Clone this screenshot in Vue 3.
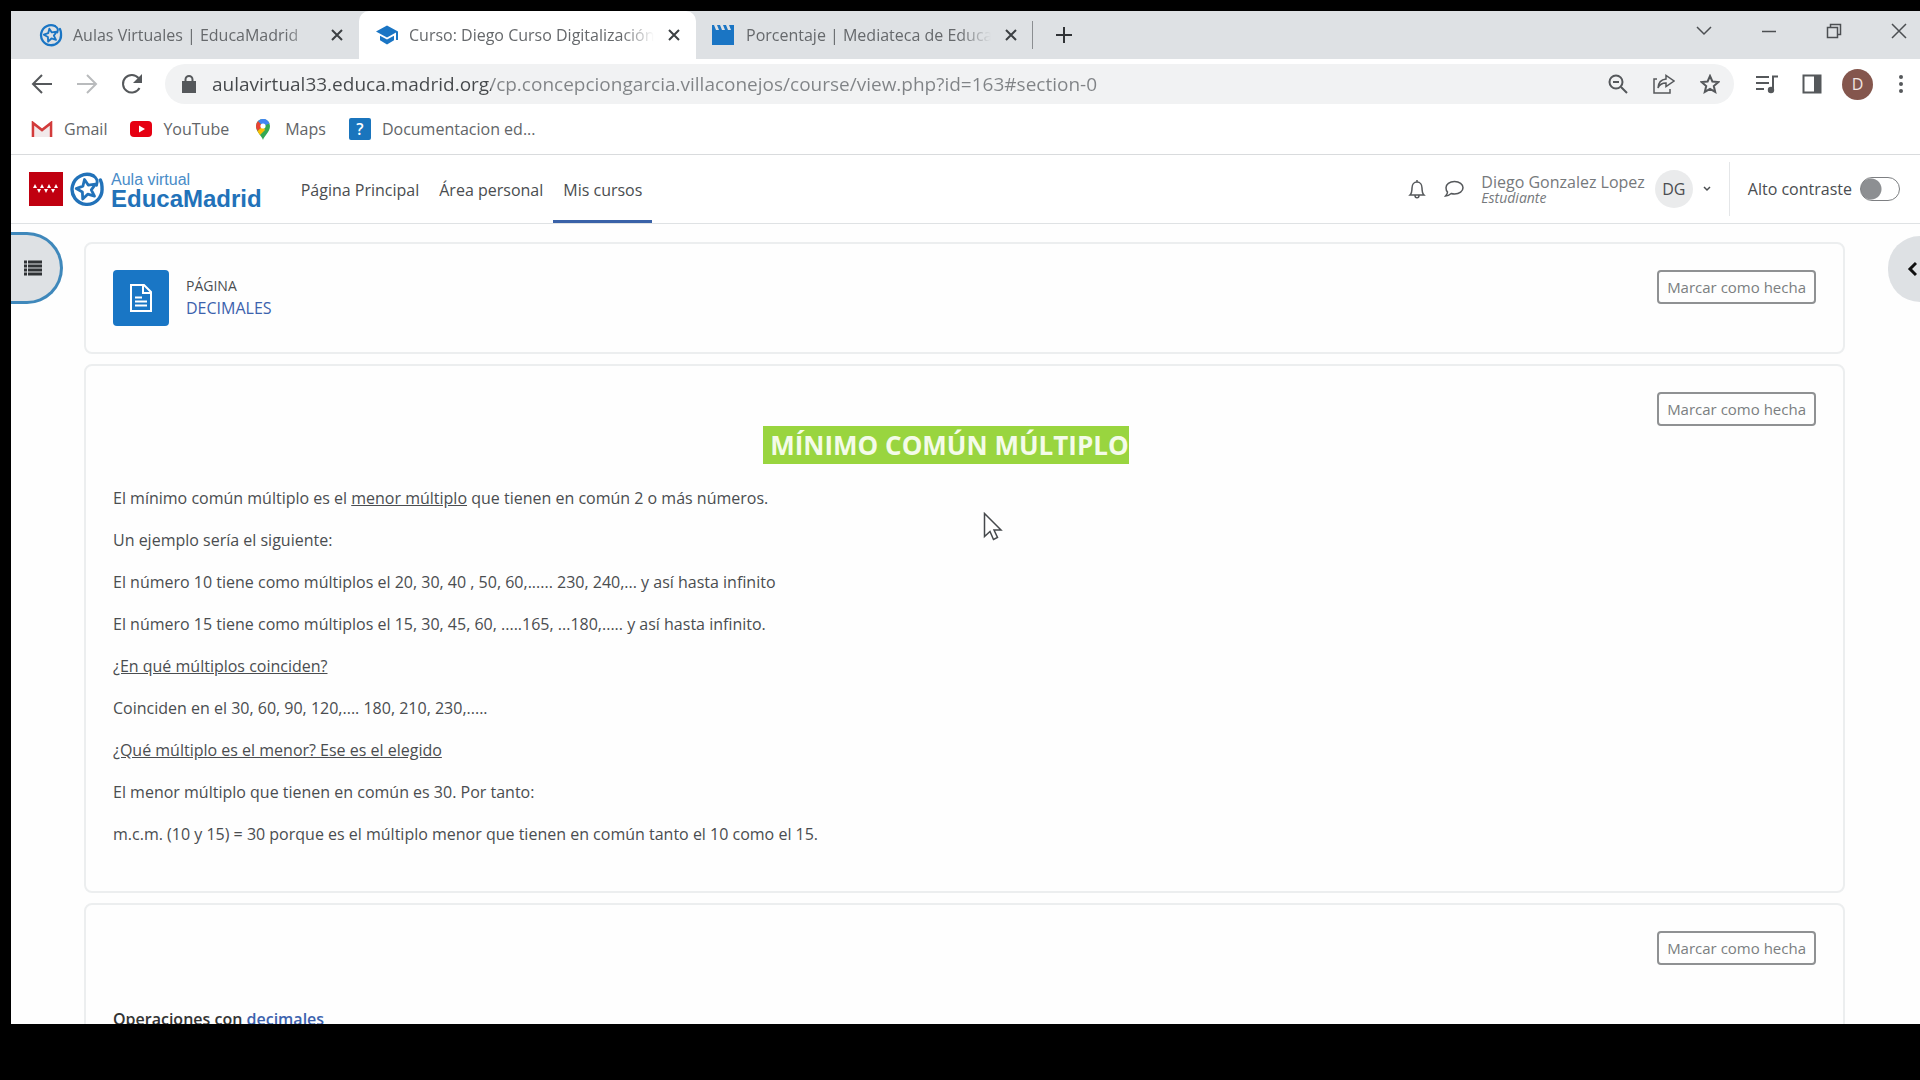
<template>
  <div class="screen">
    <svg class="sprite" aria-hidden="true">
      <symbol id="educa" viewBox="0 0 36 36">
        <path d="M24 4.600A15 15 0 1 0 33 17c.2-3-.4-5.500-1.600-8" fill="none" stroke="currentColor" stroke-width="3.400" stroke-linecap="round" />
        <path d="M24 4.600c4 2 5 6 3.500 9.500" fill="none" stroke="currentColor" stroke-width="3" stroke-linecap="round" />
        <path d="M15.500 8.500l3.700 5.600 7.300-.9-4.200 5.700 3.200 6.300-6.800-2-5 4.800-.3-7-6.200-3.400 6.700-2.500z" fill="none" stroke="currentColor" stroke-width="2.800" stroke-linejoin="round" />
      </symbol>
    </svg>

    <div class="browser">
      <div class="tab-strip">
        <div class="tabs" role="tablist">
          <div
            v-for="tab in tabs"
            :key="tab.title"
            :class="['tab', { active: tab.active }]"
          >
            <svg v-if="tab.icon === 'educa'" class="favicon"><use href="#educa" /></svg>
            <svg v-else-if="tab.icon === 'course'" class="favicon" viewBox="0 0 24 24">
              <path d="M12 2.500L1 8.500l11 6 9-4.900V17h2V8.500zM5 12.700v4.600l7 4.200 7-4.200v-4.600l-7 3.900z" fill="currentColor" />
            </svg>
            <svg v-else class="favicon" viewBox="0 0 24 24">
              <path d="M0 2h2l2 5h3L5 2h3l2 5h3l-2-5h3l2 5h3l-2-5h5v20H0z" fill="currentColor" />
            </svg>
            <button class="tab-title" role="tab" :aria-selected="tab.active">{{ tab.title }}</button>
            <button class="tab-close" aria-label="Cerrar">
              <svg width="12" height="12" viewBox="0 0 12 12"><path d="M1 1l10 10M11 1L1 11" /></svg>
            </button>
          </div>
        </div>
        <button class="new-tab" aria-label="Nueva pestaña">
          <svg width="18" height="18" viewBox="0 0 18 18"><path d="M9 1v16M1 9h16" /></svg>
        </button>
        <div class="window-controls">
          <button aria-label="Buscar pestañas">
            <svg width="16" height="16" viewBox="0 0 16 16"><path d="M1 4l7 7 7-7" /></svg>
          </button>
          <button aria-label="Minimizar">
            <svg width="16" height="16" viewBox="0 0 16 16"><path d="M1 8.500h14" /></svg>
          </button>
          <button aria-label="Restaurar">
            <svg width="16" height="16" viewBox="0 0 16 16"><path d="M1.500 4.500h10v10h-10zM4.500 4V1.500h10v10H12" /></svg>
          </button>
          <button aria-label="Cerrar ventana">
            <svg width="16" height="16" viewBox="0 0 16 16"><path d="M1 1l14 14M15 1L1 15" /></svg>
          </button>
        </div>
      </div>

      <div class="toolbar">
        <button class="tool" aria-label="Atrás">
          <svg width="22" height="22" viewBox="0 0 22 22"><path d="M21 11H2M11 2l-9 9 9 9" /></svg>
        </button>
        <button class="tool faded" aria-label="Adelante">
          <svg width="22" height="22" viewBox="0 0 22 22"><path d="M1 11h19M11 2l9 9-9 9" /></svg>
        </button>
        <button class="tool" aria-label="Recargar">
          <svg width="22" height="22" viewBox="0 0 22 22">
            <path d="M18.500 15A8.800 8.800 0 1 1 17.500 5" />
            <path d="M21 1v9h-9z" fill="currentColor" stroke="none" />
          </svg>
        </button>
        <div class="address">
          <svg class="lock" width="14" height="18" viewBox="0 0 14 18">
            <path d="M1 7h12v10H1z" fill="currentColor" />
            <path d="M3.500 8V4.500a3.500 3.500 0 0 1 7 0V8" />
          </svg>
          <input v-model="url" class="url" type="text" aria-label="Dirección" />
          <button class="tool" aria-label="Zoom">
            <svg width="20" height="20" viewBox="0 0 20 20"><circle cx="8" cy="8" r="6.500" /><path d="M13 13l6 6M5 8h6" /></svg>
          </button>
          <button class="tool" aria-label="Compartir">
            <svg width="22" height="20" viewBox="0 0 22 20" class="thin">
              <path d="M4 5H1v14h16v-4M13 5V1.500l8 5.500-8 5.500V9c-4 0-6.500 1.500-8 5 .3-5 3-8.500 8-9z" />
            </svg>
          </button>
          <button class="tool" aria-label="Añadir a marcadores">
            <svg width="20" height="20" viewBox="0 0 20 20">
              <path d="M10 2l2.400 5.500 6 .5-4.600 4 1.400 5.900L10 14.800l-5.200 3.100L6.200 12 1.600 8l6-.5z" />
            </svg>
          </button>
        </div>
        <button class="tool" aria-label="Multimedia">
          <svg width="24" height="20" viewBox="0 0 24 20">
            <path d="M1 3h13M1 9h13M1 15h8M18 16V2.500h5" />
            <circle cx="16" cy="16" r="2.200" fill="currentColor" />
          </svg>
        </button>
        <button class="tool" aria-label="Panel lateral">
          <svg width="20" height="20" viewBox="0 0 20 20">
            <path d="M1.500 1.500h17v17h-17z" />
            <path d="M12 1h7v18h-7z" fill="currentColor" stroke="none" />
          </svg>
        </button>
        <button class="profile">D</button>
        <button class="tool" aria-label="Menú">
          <svg width="6" height="20" viewBox="0 0 6 20">
            <g fill="currentColor" stroke="none"><circle cx="3" cy="3" r="2" /><circle cx="3" cy="10" r="2" /><circle cx="3" cy="17" r="2" /></g>
          </svg>
        </button>
      </div>

      <nav class="bookmarks" aria-label="Marcadores">
        <a href="#">
          <svg width="22" height="16" viewBox="0 0 22 16">
            <path d="M4 4l7 6 7-6v12H4z" fill="#f1e9ea" />
            <path d="M2 16V2l9 7 9-7v14" fill="none" stroke="#d23b3b" stroke-width="2.600" />
          </svg>
          Gmail
        </a>
        <a href="#">
          <svg width="22" height="16" viewBox="0 0 22 16">
            <rect width="22" height="16" rx="4" fill="#e60012" />
            <path d="M9 4.500v7l6-3.500z" fill="#fff" />
          </svg>
          YouTube
        </a>
        <a href="#">
          <svg width="22" height="22" viewBox="0 0 22 22">
            <path d="M11 22c-1-4-7-8-7-14a7 7 0 0 1 14 0c0 6-6 10-7 14z" fill="#34a853" />
            <path d="M4 8a7 7 0 0 1 2-5l5 5-5.500 5C4.500 11 4 9.500 4 8z" fill="#e94235" />
            <path d="M5.500 13L11 8l2 4-5 5c-1-1.300-2-2.600-2.500-4z" fill="#fbbc04" />
            <path d="M6 3a7 7 0 0 1 11.500 2.500L11 8z" fill="#4285f4" />
            <circle cx="11" cy="8" r="2.600" fill="#fff" />
          </svg>
          Maps
        </a>
        <a href="#">
          <span class="help-icon">?</span>
          Documentacion ed...
        </a>
      </nav>

      <header class="site-header">
        <a class="brand" href="#">
          <svg class="flag" width="34" height="34" viewBox="0 0 34 34">
            <rect width="34" height="34" fill="#c00010" />
            <path d="M4 16l2-4 2 4zM11 16l2-4 2 4zM18 16l2-4 2 4zM25 16l2-4 2 4zM8 17h4l-2 4zM15 17h4l-2 4zM22 17h4l-2 4z" fill="#fff" />
          </svg>
          <svg class="brand-logo"><use href="#educa" /></svg>
          <span class="brand-text">
            <span class="brand-small">Aula virtual</span>
            <span class="brand-name">EducaMadrid</span>
          </span>
        </a>
        <nav class="main-nav" aria-label="Principal">
          <a v-for="link in links" :key="link" href="#" :class="{ current: link === 'Mis cursos' }">{{ link }}</a>
        </nav>
        <div class="user-area">
          <button class="tool" aria-label="Notificaciones">
            <svg width="18" height="20" viewBox="0 0 18 20" class="thin">
              <path d="M9 1v2M2 16c2-2 2-4 2-7 0-3.500 2-6 5-6s5 2.500 5 6c0 3 0 5 2 7zM7 16.500c0 3 4 3 4 0" />
            </svg>
          </button>
          <button class="tool" aria-label="Mensajes">
            <svg width="20" height="18" viewBox="0 0 20 18" class="thin">
              <path d="M10.500 1.500c5 0 8.500 2.800 8.500 6.200S15.500 14 10.500 14c-1.200 0-2.300-.2-3.300-.5C5.500 15 3.500 16 1.500 16c1-1 2-2.500 2-4C2.500 11 2 9.500 2 7.700c0-3.400 3.500-6.200 8.500-6.200z" />
            </svg>
          </button>
          <div class="user-name">
            <span>Diego Gonzalez Lopez</span>
            <em>Estudiante</em>
          </div>
          <button class="user-menu" aria-label="Menú de usuario">
            <span class="initials">DG</span>
            <svg width="8" height="8" viewBox="0 0 8 8" class="thin"><path d="M1 2l3 3 3-3" /></svg>
          </button>
          <label class="contrast" for="contrast">
            Alto contraste
            <input id="contrast" v-model="highContrast" type="checkbox" />
          </label>
        </div>
      </header>

      <main class="course">
        <button class="drawer drawer-left" aria-label="Abrir índice del curso">
          <svg width="18" height="16" viewBox="0 0 18 16">
            <path d="M0 2h3M0 6h3M0 10h3M0 14h3M4 2h14M4 6h14M4 10h14M4 14h14" />
          </svg>
        </button>
        <button class="drawer drawer-right" aria-label="Abrir cajón de bloques">
          <svg width="10" height="16" viewBox="0 0 10 16"><path d="M9 2L3 8l6 6" /></svg>
        </button>

        <section class="card">
          <div class="activity">
            <span class="activity-icon">
              <svg width="24" height="30" viewBox="0 0 24 30">
                <path d="M2 2h13l7 7v19H2zM14 2v8h8M6 14.500h7M6 18.500h12M6 22.500h12" />
              </svg>
            </span>
            <div class="activity-name">
              <span>PÁGINA</span>
              <a href="#">DECIMALES</a>
            </div>
          </div>
          <button class="done">Marcar como hecha</button>
        </section>

        <section class="card lesson">
          <div class="lesson-text">
            <h2><mark>&nbsp;MÍNIMO COMÚN MÚLTIPLO</mark></h2>
            <p>El mínimo común múltiplo es el <u>menor múltiplo</u> que tienen en común 2 o más números.</p>
            <p>Un ejemplo sería el siguiente:</p>
            <p>El número 10 tiene como múltiplos el 20, 30, 40 , 50, 60,...... 230, 240,... y así hasta infinito</p>
            <p>El número 15 tiene como múltiplos el 15, 30, 45, 60, .....165, ...180,..... y así hasta infinito.</p>
            <p><u>¿En qué múltiplos coinciden?</u></p>
            <p>Coinciden en el 30, 60, 90, 120,.... 180, 210, 230,.....</p>
            <p><u>¿Qué múltiplo es el menor? Ese es el elegido</u></p>
            <p>El menor múltiplo que tienen en común es 30. Por tanto:</p>
            <p>m.c.m. (10 y 15) = 30 porque es el múltiplo menor que tienen en común tanto el 10 como el 15.</p>
          </div>
          <button class="done">Marcar como hecha</button>
        </section>

        <section class="card operations">
          <p>Operaciones con <a href="#">decimales</a></p>
          <button class="done">Marcar como hecha</button>
        </section>
      </main>
    </div>

    <svg class="pointer" width="20" height="30" viewBox="0 0 20 30">
      <path d="M1.500 1.500v23l5.500-5 3.500 8 4-2-3.500-7.500h7z" />
    </svg>
  </div>
</template>

<script setup>
import { ref } from 'vue'

const url = ref('aulavirtual33.educa.madrid.org/cp.concepciongarcia.villaconejos/course/view.php?id=163#section-0')
const highContrast = ref(false)

const tabs = [
  { title: 'Aulas Virtuales | EducaMadrid', icon: 'educa', active: false },
  { title: 'Curso: Diego Curso Digitalización', icon: 'course', active: true },
  { title: 'Porcentaje | Mediateca de EducaMadrid', icon: 'media', active: false }
]

const links = ['Página Principal', 'Área personal', 'Mis cursos']
</script>

<style>
body {
  margin: 0;
  background: #000;
}
</style>

<style scoped>
.screen {
  position: relative;
  box-sizing: border-box;
  height: 100vh;
  padding: 11px 0 56px 11px;
  background: #000;
  font-family: "Open Sans", "Noto Sans", sans-serif;
  font-size: 16px;
  color: #4a4d50;
}

.sprite {
  position: absolute;
  width: 0;
  height: 0;
}

.browser {
  display: flex;
  flex-direction: column;
  height: 100%;
  overflow: hidden;
  background: #fefefe;
}

button {
  display: flex;
  align-items: center;
  justify-content: center;
  flex: none;
  padding: 0;
  border: 0;
  background: none;
  font: inherit;
  color: inherit;
}

a {
  color: inherit;
  text-decoration: none;
}

svg {
  flex: none;
  fill: none;
  stroke: currentColor;
  stroke-width: 2;
}

.thin {
  stroke-width: 1.5;
}

/* tab strip */
.tab-strip {
  display: flex;
  align-items: center;
  flex: none;
  height: 48px;
  background: #dee1e4;
}

.tabs {
  display: flex;
  height: 48px;
}

.tab {
  display: flex;
  align-items: center;
  box-sizing: border-box;
  width: 337px;
  padding: 0 14px 0 16px;
}

.tab:first-child {
  width: 348px;
  padding-left: 28px;
}

.tab.active {
  border-radius: 10px 10px 0 0;
  background: #fff;
}

.tab:last-child {
  position: relative;
}

.tab:last-child::after {
  content: "";
  position: absolute;
  right: 0;
  width: 1px;
  height: 28px;
  background: #8b8e91;
}

.favicon {
  width: 24px;
  height: 24px;
  color: #1a75c4;
  stroke: none;
}

.tab-title {
  display: block;
  flex: 1;
  min-width: 0;
  margin: 0 8px 0 10px;
  overflow: hidden;
  text-align: left;
  white-space: nowrap;
  color: #66696c;
  mask-image: linear-gradient(to right, #000 calc(100% - 36px), transparent calc(100% - 4px));
}

.tab-close {
  width: 16px;
  height: 24px;
  color: #3c4043;
}

.new-tab {
  width: 62px;
  color: #303336;
}

.window-controls {
  display: flex;
  margin-left: auto;
  padding-bottom: 8px;
  color: #4c4f52;
}

.window-controls button {
  width: 65px;
  height: 32px;
}

.window-controls button:last-child {
  width: 54px;
  padding-left: 12px;
  box-sizing: border-box;
}

.window-controls svg {
  stroke-width: 1.5;
}

/* toolbar */
.toolbar {
  display: flex;
  align-items: center;
  flex: none;
  gap: 21px;
  padding: 5px 16px 0 19px;
  background: #fff;
}

.tool {
  min-width: 6px;
  height: 24px;
  color: #55585b;
}

.toolbar > .tool:not(:last-child) {
  width: 24px;
}

.tool.faded {
  color: #b9bbbd;
}

.address {
  display: flex;
  align-items: center;
  flex: 1;
  gap: 25px;
  height: 40px;
  padding: 0 14px 0 17px;
  border-radius: 20px;
  background: #f1f2f3;
}

.lock {
  color: #55585b;
}

.url {
  flex: 1;
  min-width: 0;
  margin-left: -9px;
  padding: 0;
  border: 0;
  outline: none;
  font: inherit;
  font-size: 19px;
  background: linear-gradient(to right, #45484b 279px, #808386 279px);
  background-clip: text;
  -webkit-text-fill-color: transparent;
}

.profile {
  width: 31px;
  height: 31px;
  margin-left: -3px;
  margin-right: 4px;
  border-radius: 50%;
  background: #84564d;
  color: #f3e6e2;
  font-size: 16px;
}

/* bookmarks */
.bookmarks {
  display: flex;
  align-items: center;
  flex: none;
  gap: 23px;
  height: 50px;
  padding: 0 20px;
  border-bottom: 1px solid #d9dbdd;
  background: #fff;
  color: #626568;
}

.bookmarks a {
  display: flex;
  align-items: center;
  gap: 11px;
}

.bookmarks svg {
  stroke: none;
}

.help-icon {
  width: 22px;
  height: 22px;
  border-radius: 2px;
  background: #1a75bd;
  color: #fff;
  font-weight: 600;
  line-height: 22px;
  text-align: center;
}

/* site header */
.site-header {
  display: flex;
  align-items: stretch;
  flex: none;
  height: 68px;
  padding: 0 20px 0 18px;
  border-bottom: 1px solid #dfe2e4;
  background: #fff;
}

.brand {
  display: flex;
  align-items: center;
  color: #2272b9;
  font-family: "Liberation Sans", Arial, sans-serif;
}

.brand .flag {
  stroke: none;
}

.brand-logo {
  width: 36px;
  height: 36px;
  margin: 0 6px;
  stroke: none;
}

.brand-text {
  display: flex;
  flex-direction: column;
  padding-top: 4px;
}

.brand-small {
  color: #4a8cc8;
  font-size: 16px;
  line-height: 16px;
}

.brand-name {
  font-size: 24px;
  font-weight: 700;
  line-height: 22px;
}

.main-nav {
  display: flex;
  margin-left: 29px;
}

.main-nav a {
  display: flex;
  align-items: center;
  padding: 4px 10px 0;
  border-bottom: 3px solid transparent;
}

.main-nav .current {
  border-bottom-color: #3a62a8;
}

.user-area {
  display: flex;
  align-items: center;
  gap: 18px;
  margin-left: auto;
}

.user-name {
  display: flex;
  flex-direction: column;
  margin-left: -1px;
  color: #76797c;
  line-height: 18px;
}

.user-name em {
  font-size: 14px;
  line-height: 14px;
}

.user-menu {
  gap: 10px;
  margin-left: -8px;
}

.initials {
  width: 38px;
  height: 38px;
  border-radius: 50%;
  background: #eaebec;
  line-height: 38px;
}

.contrast {
  display: flex;
  align-items: center;
  gap: 8px;
  height: 54px;
  padding-left: 18px;
  border-left: 1px solid #e4e6e8;
}

.contrast input {
  appearance: none;
  width: 40px;
  height: 24px;
  margin: 0;
  border: 1px solid #7d7f82;
  border-radius: 12px;
  background: radial-gradient(circle at 10px 11px, #8d8f92 10px, transparent 11px);
}

/* course content */
.course {
  position: relative;
  display: flex;
  flex-direction: column;
  flex: 1;
  gap: 10px;
  min-height: 0;
  padding: 18px 75px 0 73px;
}

.card {
  display: flex;
  align-items: flex-start;
  justify-content: space-between;
  flex: none;
  box-sizing: border-box;
  padding: 26px 27px;
  border: 2px solid #eceeef;
  border-radius: 8px;
}

.activity {
  display: flex;
  align-items: center;
  gap: 17px;
}

.activity-icon {
  display: flex;
  align-items: center;
  justify-content: center;
  width: 56px;
  height: 56px;
  border-radius: 4px;
  background: #1976c5;
  color: #fff;
}

.activity-name {
  display: flex;
  flex-direction: column;
  line-height: 24px;
}

.activity-name span {
  font-size: 14px;
  line-height: 20px;
}

.activity-name a,
.operations a {
  color: #3c62ad;
}

.done {
  box-sizing: border-box;
  height: 34px;
  padding: 0 8px;
  border: 2px solid #8f9193;
  border-radius: 4px;
  color: #7b7e81;
  font-size: 15px;
  white-space: nowrap;
}

.lesson {
  min-height: 529px;
}

.lesson-text {
  flex: 1;
  padding: 34px 0 0;
  margin-right: -122px;
}

.lesson-text h2 {
  margin: 0 0 22px;
  text-align: center;
  font-size: 26px;
  line-height: 38px;
}

.lesson-text mark {
  display: inline-block;
  background: #99d53f;
  color: #f4fbe9;
}

.lesson-text p {
  margin: 0 0 18px;
  line-height: 24px;
}

.operations p {
  margin: 76px 0 0;
  font-weight: 600;
  line-height: 24px;
  color: #333;
}

.drawer {
  position: absolute;
  box-sizing: border-box;
  background: #dee1e4;
  color: #2f3235;
}

.drawer-left {
  top: 8px;
  left: 0;
  width: 52px;
  height: 72px;
  padding-right: 5px;
  border: 3px solid #3f88bb;
  border-left: 0;
  border-radius: 0 36px 36px 0;
}

.drawer-left svg {
  stroke-width: 3;
}

.drawer-right {
  top: 12px;
  right: 0;
  width: 32px;
  height: 66px;
  padding-left: 16px;
  border-radius: 33px 0 0 33px;
  color: #111;
}

.drawer-right svg {
  stroke-width: 3;
}

.pointer {
  position: absolute;
  top: 512px;
  left: 983px;
  fill: #fff;
  stroke: #46494c;
  stroke-width: 1.5;
}
</style>
